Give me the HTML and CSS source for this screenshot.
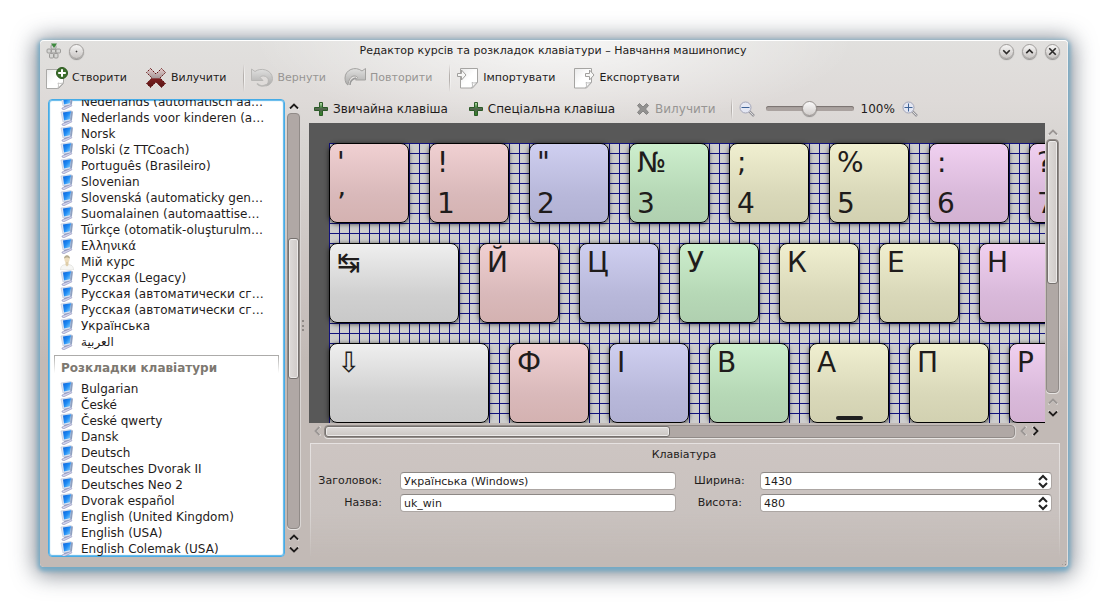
FILE: index.html
```html
<!DOCTYPE html>
<html lang="uk">
<head>
<meta charset="utf-8">
<title>Редактор курсів та розкладок клавіатури – Навчання машинопису</title>
<link rel="stylesheet" href="styles.css">
</head>
<body>
<svg class="defs" aria-hidden="true">
  <defs>
    <linearGradient id="screen" x1="0" y1="0" x2="1" y2="1"><stop offset="0" stop-color="#0a5fd8"/><stop offset=".5" stop-color="#1f8cf4"/><stop offset="1" stop-color="#9adcff"/></linearGradient>
    <linearGradient id="paper" x1="0" y1="0" x2="1" y2="1"><stop offset="0" stop-color="#e9e9e9"/><stop offset=".5" stop-color="#fff"/></linearGradient>
    <linearGradient id="plusfill" x1="0" y1="0" x2="0" y2="1"><stop offset="0" stop-color="#bfe6b0"/><stop offset=".35" stop-color="#4f8a4a"/><stop offset=".5" stop-color="#54604f"/><stop offset="1" stop-color="#2f8a22"/></linearGradient>
    <linearGradient id="crossfill" x1="0" y1="0" x2="0" y2="1"><stop offset="0" stop-color="#e6cccc"/><stop offset=".48" stop-color="#a89a9a"/><stop offset=".55" stop-color="#7a2020"/><stop offset="1" stop-color="#5a1515"/></linearGradient>
    <linearGradient id="arrowfill" x1="0" y1="0" x2="0" y2="1"><stop offset="0" stop-color="#e0e0df"/><stop offset="1" stop-color="#acabaa"/></linearGradient>
  </defs>
  <symbol id="computer" viewBox="0 0 16 16">
    <path d="M1 2l9.500-1.500 2 1-1 9-8.500 1.500z" fill="#dfe6f3" stroke="#b7c3da" stroke-width=".6"/>
    <path d="M3 2.500l8-1.300-1 8-6 1.300z" fill="url(#screen)"/>
    <path d="M11 1.200l1.800.5-1 9-1.700-1.200z" fill="#8e9fc0"/>
    <path d="M4 12l5-1 1 1.500-5 2z" fill="#8a93b8"/>
    <path d="M2 14l9-3.500 1 1.200-8 4-2-.7z" fill="#d5d5ee" stroke="#8f93bb" stroke-width=".6"/>
  </symbol>
  <symbol id="person" viewBox="0 0 16 16">
    <path d="M.5 16c0-4 2-5.500 6.500-5.500s6.500 1.500 6.500 5.500z" fill="#f6f6f4" stroke="#deded8" stroke-width=".7"/>
    <ellipse cx="7" cy="5" rx="2.600" ry="3.500" fill="#ecdcbc"/><path d="M4 5c-.3-5 6.300-5 6 0-1-2-5-2-6 0z" fill="#b5ac91"/>
    <path d="M5.500 8h3v3L7 12.500 5.500 11z" fill="#dfcda8"/>
  </symbol>
  <symbol id="plus" viewBox="0 0 16 16"><path d="M6.500 1.500h3v5h5v3h-5v5h-3v-5h-5v-3h5z" fill="url(#plusfill)" stroke="#2c5a28" stroke-width="1" stroke-linejoin="round"/></symbol>
  <symbol id="up" viewBox="0 0 12 12"><path d="M1.500 9.500L6 5l4.500 4.500" fill="none" stroke="#fff" stroke-opacity=".6" stroke-width="1.600"/><path d="M2 8.500l4-4 4 4" fill="none" stroke="currentColor" stroke-width="1.800"/></symbol>
</svg>

<div class="window">
  <header class="titlebar">
    <div class="title-side">
      <svg class="icon16" viewBox="0 0 16 16"><g fill="#d6d6d4" stroke="#8e8d8b" stroke-width=".8"><rect x="1" y="6" width="4" height="4" rx="1"/><rect x="5.500" y="6" width="4" height="4" rx="1"/><rect x="10" y="6" width="4.500" height="4" rx="1"/><rect x="3.500" y="10.500" width="4" height="4.500" rx="1"/><rect x="8" y="10.500" width="4" height="4.500" rx="1"/><rect x="5" y="2" width="5" height="4" rx="1"/></g><path d="M5 .5h6L8 5z" fill="#3e8a3e"/></svg>
      <button class="round" aria-label="Меню вікна"><svg viewBox="0 0 16 16"><circle cx="8" cy="8" r=".6" fill="#333" stroke-width="1"/></svg></button>
    </div>
    <h1 class="title">Редактор курсів та розкладок клавіатури – Навчання машинопису</h1>
    <div class="title-side end">
      <button class="round" aria-label="Згорнути"><svg viewBox="0 0 16 16"><path d="M4 6.500l4 4 4-4"/></svg></button>
      <button class="round" aria-label="Розгорнути"><svg viewBox="0 0 16 16"><path d="M4 10l4-4 4 4"/></svg></button>
      <button class="round" aria-label="Закрити"><svg viewBox="0 0 16 16"><path d="M4 4l8 8M12 4l-8 8"/></svg></button>
    </div>
  </header>

  <nav class="toolbar">
    <button class="tool"><svg class="icon22" viewBox="0 0 22 22"><path d="M.5 2.500h17v14l-5 5H.5z" fill="url(#paper)" stroke="#aaa9a7"/><path d="M11.500 21.500c1.500-1.500 1-4 .5-5.500 2 .8 4 .5 5.500-.5z" fill="#fff" stroke="#b5b4b2" stroke-width=".8"/><circle cx="16" cy="6" r="5.500" fill="#3c6e2c" stroke="#2c5a20"/><path d="M16 2.200v7.600M12.200 6h7.600" stroke="#fff" stroke-width="2"/></svg>Створити</button>
    <button class="tool"><svg class="icon22" viewBox="0 0 22 22"><path d="M5.500 1.500L11 7l5.500-5.500 4 4L15 11l5.500 5.500-4 4L11 15l-5.500 5.500-4-4L7 11 1.500 5.500z" fill="url(#crossfill)" stroke="#651717" stroke-dasharray="2 1"/></svg>Вилучити</button>
    <span class="sep"></span>
    <button class="tool" disabled><svg class="icon22" viewBox="0 0 22 22"><path d="M.5 2l3.500 2.500C9 .5 21 2 21.500 11.500c0 4-3 7-7 7.500 5-4 3-10-2-10-2 0-2.500.5-3.500 1.500l3 3H.5z" fill="url(#arrowfill)" stroke="#b8b7b5"/><path d="M6 16.500c2 2.500 6 3 10 1" fill="none" stroke="#b9b8b6" stroke-width="1.500"/></svg>Вернути</button>
    <button class="tool" disabled><svg class="icon22" viewBox="0 0 22 22"><path d="M21.500 1.500L18 4C11-1.500 1 3 1 11c0 4 1.500 6.500 3 7 .5-5 3-9 6-9 2 0 3 .5 3.500 1.500L11.500 13h10z" fill="url(#arrowfill)" stroke="#a3a2a0"/><path d="M6 18c0-3 2-6 6-7" fill="none" stroke="#999" stroke-width="1.500"/></svg>Повторити</button>
    <span class="sep"></span>
    <button class="tool"><svg class="icon22" viewBox="0 0 22 22"><path d="M3.500 1.500h17v14l-5 5.500h-12z" fill="url(#paper)" stroke="#a5a4a2"/><path d="M14.500 21c1.500-1.500 1-4 .5-5.500 2 .8 4 .5 5.500-.5z" fill="#fff" stroke="#aaa" stroke-width=".8"/><path d="M.5 6.500h4V3L9 8l-4.500 5V9.500h-4z" fill="#f7f7f6" stroke="#a09f9d"/></svg>Імпортувати</button>
    <button class="tool"><svg class="icon22" viewBox="0 0 22 22"><path d="M1.500 1.500h17v14l-5 5.500h-12z" fill="url(#paper)" stroke="#a5a4a2"/><path d="M12.500 21c1.500-1.500 1-4 .5-5.500 2 .8 4 .5 5.500-.5z" fill="#fff" stroke="#aaa" stroke-width=".8"/><path d="M12.500 6.500h4V3L21 8l-4.500 5V9.500h-4z" fill="#f7f7f6" stroke="#a09f9d"/></svg>Експортувати</button>
  </nav>

  <div class="content">
    <aside class="sidebar">
      <div class="list">
        <ul>
          <li><svg><use href="#computer"/></svg>Nederlands (automatisch aa…</li>
          <li><svg><use href="#computer"/></svg>Nederlands voor kinderen (a…</li>
          <li><svg><use href="#computer"/></svg>Norsk</li>
          <li><svg><use href="#computer"/></svg>Polski (z TTCoach)</li>
          <li><svg><use href="#computer"/></svg>Português (Brasileiro)</li>
          <li><svg><use href="#computer"/></svg>Slovenian</li>
          <li><svg><use href="#computer"/></svg>Slovenská (automaticky gen…</li>
          <li><svg><use href="#computer"/></svg>Suomalainen (automaattise…</li>
          <li><svg><use href="#computer"/></svg>Türkçe (otomatik-oluşturulm…</li>
          <li><svg><use href="#computer"/></svg>Ελληνικά</li>
          <li><svg><use href="#person"/></svg>Мій курс</li>
          <li><svg><use href="#computer"/></svg>Русская (Legacy)</li>
          <li><svg><use href="#computer"/></svg>Русская (автоматически сг…</li>
          <li><svg><use href="#computer"/></svg>Русская (автоматически сг…</li>
          <li><svg><use href="#computer"/></svg>Українська</li>
          <li><svg><use href="#computer"/></svg>العربية</li>
        </ul>
        <h2 class="group">Розкладки клавіатури</h2>
        <ul class="layouts">
          <li><svg><use href="#computer"/></svg>Bulgarian</li>
          <li><svg><use href="#computer"/></svg>České</li>
          <li><svg><use href="#computer"/></svg>České qwerty</li>
          <li><svg><use href="#computer"/></svg>Dansk</li>
          <li><svg><use href="#computer"/></svg>Deutsch</li>
          <li><svg><use href="#computer"/></svg>Deutsches Dvorak II</li>
          <li><svg><use href="#computer"/></svg>Deutsches Neo 2</li>
          <li><svg><use href="#computer"/></svg>Dvorak español</li>
          <li><svg><use href="#computer"/></svg>English (United Kingdom)</li>
          <li><svg><use href="#computer"/></svg>English (USA)</li>
          <li><svg><use href="#computer"/></svg>English Colemak (USA)</li>
        </ul>
      </div>
      <div class="scroll vertical">
        <button class="arrow" aria-label="Вгору"><svg><use href="#up"/></svg></button>
        <div class="track"><div class="thumb" style="top:30%;height:34%"></div></div>
        <button class="arrow" aria-label="Вгору"><svg><use href="#up"/></svg></button>
        <button class="arrow down" aria-label="Вниз"><svg><use href="#up"/></svg></button>
      </div>
    </aside>
    <div class="splitter"></div>

    <main class="editor">
      <div class="keybar">
        <button class="tool"><svg class="icon16"><use href="#plus"/></svg>Звичайна клавіша</button>
        <button class="tool"><svg class="icon16"><use href="#plus"/></svg>Спеціальна клавіша</button>
        <button class="tool" disabled><svg class="icon16" viewBox="0 0 16 16"><path d="M4.500 2.500L8 6l3.500-3.500 2 2L10.500 8l3 3.500-2 2L8 10l-3.500 3.500-2-2L5.500 8l-3-3.500z" fill="#929190" stroke="#868584" stroke-linejoin="round"/></svg>Вилучити</button>
        <span class="sep"></span>
        <div class="zoom">
          <button class="tool" aria-label="Зменшити"><svg class="icon16" viewBox="0 0 16 16"><path d="M10 10l5 5" stroke="#96959a" stroke-width="2.500"/><path d="M10 10l4.500 4.500" stroke="#ddd" stroke-width="1"/><circle cx="6.500" cy="6.500" r="5.500" fill="#e4e7f3" stroke="#a4a6b8"/><path d="M2.500 6.500h8" stroke="#3d6296"/></svg></button>
          <input class="slider" type="range" min="0" max="200" value="100" aria-label="Масштаб">
          <output>100%</output>
          <button class="tool" aria-label="Збільшити"><svg class="icon16" viewBox="0 0 16 16"><path d="M10 10l5 5" stroke="#96959a" stroke-width="2.500"/><path d="M10 10l4.500 4.500" stroke="#ddd" stroke-width="1"/><circle cx="6.500" cy="6.500" r="5.500" fill="#e4e7f3" stroke="#a4a6b8"/><path d="M2.500 6.500h8M6.500 2.500v8" stroke="#3d6296"/></svg></button>
        </div>
      </div>

      <div class="view">
        <div class="canvas">
          <div class="keyboard">
            <div class="row">
              <div class="key red"><span>'</span><span>’</span></div>
              <div class="key red"><span>!</span><span>1</span></div>
              <div class="key blue"><span>"</span><span>2</span></div>
              <div class="key green"><span>№</span><span>3</span></div>
              <div class="key yellow"><span>;</span><span>4</span></div>
              <div class="key yellow"><span>%</span><span>5</span></div>
              <div class="key violet"><span>:</span><span>6</span></div>
              <div class="key violet"><span>?</span><span>7</span></div>
            </div>
            <div class="row">
              <div class="key tab"><span>↹</span></div>
              <div class="key red"><span>Й</span></div>
              <div class="key blue"><span>Ц</span></div>
              <div class="key green"><span>У</span></div>
              <div class="key yellow"><span>К</span></div>
              <div class="key yellow"><span>Е</span></div>
              <div class="key violet"><span>Н</span></div>
            </div>
            <div class="row">
              <div class="key caps"><span>⇩</span></div>
              <div class="key red"><span>Ф</span></div>
              <div class="key blue"><span>І</span></div>
              <div class="key green"><span>В</span></div>
              <div class="key yellow home"><span>А</span></div>
              <div class="key yellow"><span>П</span></div>
              <div class="key violet"><span>Р</span></div>
            </div>
          </div>
        </div>
        <div class="scroll vertical">
          <button class="arrow" disabled aria-label="Вгору"><svg><use href="#up"/></svg></button>
          <div class="track"><div class="thumb" style="top:0;height:57%"></div></div>
          <button class="arrow" disabled aria-label="Вгору"><svg><use href="#up"/></svg></button>
          <button class="arrow down" aria-label="Вниз"><svg><use href="#up"/></svg></button>
        </div>
        <div class="scroll horizontal">
          <button class="arrow left" disabled aria-label="Ліворуч"><svg><use href="#up"/></svg></button>
          <div class="track"><div class="thumb" style="left:0;width:50%"></div></div>
          <button class="arrow left" disabled aria-label="Ліворуч"><svg><use href="#up"/></svg></button>
          <button class="arrow right" aria-label="Праворуч"><svg><use href="#up"/></svg></button>
        </div>
      </div>

      <section class="panel">
        <h2>Клавіатура</h2>
        <form class="form">
          <label for="caption">Заголовок:</label>
          <input id="caption" class="field" type="text" value="Українська (Windows)">
          <label for="width">Ширина:</label>
          <div class="spin"><input id="width" class="field" type="number" value="1430"><svg viewBox="0 0 12 16"><path d="M2 7l4-4 4 4M2 10l4 4 4-4"/></svg></div>
          <label for="name">Назва:</label>
          <input id="name" class="field" type="text" value="uk_win">
          <label for="height">Висота:</label>
          <div class="spin"><input id="height" class="field" type="number" value="480"><svg viewBox="0 0 12 16"><path d="M2 7l4-4 4 4M2 10l4 4 4-4"/></svg></div>
        </form>
      </section>
    </main>
  </div>
  <span class="grip"></span>
</div>
</body>
</html>
```
FILE: styles.css
```css
* { box-sizing: border-box; }

body {
  margin: 0;
  height: 100vh;
  padding: 40px;
  display: flex;
  background: #fff;
  color: #1f1c1b;
  font: 11px/16px "DejaVu Sans", sans-serif;
}

.defs { position: absolute; width: 0; height: 0; }

h1, h2, ul { margin: 0; padding: 0; font: inherit; }

button {
  margin: 0;
  padding: 0;
  border: 0;
  background: none;
  color: inherit;
  font: inherit;
}

.window {
  position: relative;
  flex: 1;
  min-width: 0;
  display: flex;
  flex-direction: column;
  padding: 0 8px 10px 6px;
  border-radius: 4px;
  background:
    radial-gradient(ellipse 300px 90px at 50% 0, rgba(255, 255, 255, .75), rgba(255, 255, 255, 0)),
    linear-gradient(#e1e0de, #dedad8 60px, #d8d5d2 100px, #c9c1be 260px, #c2bab6 320px);
  box-shadow:
    inset 0 1px 0 #fff,
    inset -1px 0 0 rgba(255, 255, 255, .5),
    0 2px 4px 2px #74aac6,
    0 3px 22px 5px rgba(50, 60, 75, .6);
}

.titlebar {
  display: grid;
  grid-template-columns: 1fr auto 1fr;
  align-items: center;
  height: 22px;
}

.title-side { display: flex; align-items: center; gap: 7px; }
.title-side.end { justify-content: flex-end; gap: 8px; }
.icon16 { width: 16px; height: 16px; flex: none; }
.icon22 { width: 22px; height: 22px; flex: none; }

.round {
  width: 15px;
  height: 15px;
  border: 1px solid #a09d9b;
  border-radius: 50%;
  background: linear-gradient(#f6f5f4, #c9c6c4);
  box-shadow: 0 1px 1px rgba(0, 0, 0, .35);
  display: grid;
}
.round svg { width: 13px; height: 13px; fill: none; stroke: #2d2b2a; stroke-width: 2; }

.toolbar { display: flex; align-items: center; height: 32px; gap: 18px; }
.tool { display: flex; align-items: center; gap: 4px; white-space: nowrap; }
.tool:disabled { color: #979593; }
.sep {
  width: 2px;
  height: 28px;
  margin: 0 -12px 0 -1px;
  background: linear-gradient(90deg, #b5b0ad 1px, #f3f2f1 1px);
  -webkit-mask-image: linear-gradient(transparent, #000 40%, #000 60%, transparent);
  mask-image: linear-gradient(transparent, #000 40%, #000 60%, transparent);
}

.content { flex: 1; min-height: 0; display: flex; }

.sidebar { display: flex; width: 255px; padding: 5px 0 0 2px; flex: none; }

.list {
  flex: 1;
  min-width: 0;
  display: flex;
  flex-direction: column;
  justify-content: flex-end;
  overflow: hidden;
  padding: 0 5px;
  border: 1px solid #46abe6;
  border-radius: 4px;
  background: #fff;
  box-shadow: inset 0 0 1px 1px #5cb6ea;
  font-size: 12px;
}
.list ul { list-style: none; }
.list .layouts { margin-bottom: -1px; }
.list li { display: flex; align-items: center; gap: 5px; height: 16px; padding-left: 6px; white-space: nowrap; }
.list svg { width: 16px; height: 16px; flex: none; }

.group {
  margin: 5px 0 0;
  padding: 4px 6px;
  height: 26px;
  border: 1px solid;
  border-image: linear-gradient(#aaa9a7, transparent 70%) 1;
  color: #7d7870;
  font-weight: bold;
  white-space: nowrap;
}

.scroll { display: flex; align-items: center; }
.scroll.vertical { flex-direction: column; width: 15px; padding: 2px 0 3px; }
.scroll.horizontal { height: 16px; padding: 0 3px 0 1px; }
.sidebar .scroll { margin-left: 1px; padding: 0 0 1px; }

.arrow { width: 13px; height: 13px; display: grid; place-items: center; flex: none; }
.arrow svg { width: 12px; height: 12px; }
.arrow:disabled { color: #9b9694; }
.arrow.down svg { transform: rotate(180deg); }
.arrow.left svg { transform: rotate(-90deg); }
.arrow.right svg { transform: rotate(90deg); }

.track {
  position: relative;
  flex: 1;
  border: 1px solid #918b88;
  border-radius: 4px;
  background: #b0a8a5;
  box-shadow: 0 1px 0 #e8e5e3, 1px 0 0 #dad6d4;
}
.vertical .track { width: 13px; margin: 1px 0; }
.horizontal .track { height: 13px; margin: 0 1px; }

.thumb {
  position: absolute;
  border: 1px solid #76716e;
  border-radius: 3px;
  background: linear-gradient(90deg, #dedbd9, #cfcac8);
  box-shadow: inset 0 0 0 1px #eceae9;
}
.vertical .thumb { left: 0; right: 0; }
.horizontal .thumb { top: 0; bottom: 0; background: linear-gradient(#dedbd9, #cbc6c3); }

.splitter {
  width: 8px;
  flex: none;
  background: radial-gradient(circle at 2px 2px, #8f8986 1px, transparent 1px) 0 50% / 8px 4px no-repeat,
    radial-gradient(circle at 2px 2px, #8f8986 1px, transparent 1px) 0 51% / 8px 4px no-repeat,
    radial-gradient(circle at 2px 2px, #8f8986 1px, transparent 1px) 0 49% / 8px 4px no-repeat;
}

.editor { flex: 1; min-width: 0; display: flex; flex-direction: column; }

.keybar { display: flex; align-items: center; height: 29px; padding-left: 4px; gap: 20px; font-size: 12px; }
.keybar .sep { height: 22px; margin: 0 -14px 0 -5px; }
.zoom { display: flex; align-items: center; gap: 7px; }

.slider { appearance: none; width: 88px; height: 16px; margin: 0 0 0 4px; background: none; }
.slider::-webkit-slider-runnable-track {
  height: 5px;
  border-radius: 3px;
  background: #aaa29f;
  box-shadow: inset 0 1px 1px #78716e;
}
.slider::-webkit-slider-thumb {
  appearance: none;
  width: 15px;
  height: 15px;
  margin-top: -5px;
  border: 1px solid #989390;
  border-radius: 50%;
  background: linear-gradient(#faf9f9, #d2cecc);
  box-shadow: 0 1px 1px rgba(0, 0, 0, .35);
}

.view {
  flex: 1;
  min-height: 0;
  display: grid;
  grid-template-columns: minmax(0, 1fr) 15px;
  grid-template-rows: minmax(0, 1fr) 16px;
}

.canvas { overflow: hidden; padding: 20px; background: #585858; }

.keyboard {
  width: 1430px;
  height: 480px;
  display: flex;
  flex-direction: column;
  gap: 20px;
  background:
    linear-gradient(90deg, #10107c 1px, transparent 1px) 0 0 / 10px 10px,
    linear-gradient(#10107c 1px, transparent 1px) 0 0 / 10px 10px,
    #cdcdcd;
}

.row { display: flex; gap: 20px; }

.key {
  position: relative;
  flex: none;
  width: 80px;
  height: 80px;
  display: flex;
  flex-direction: column;
  justify-content: space-between;
  padding: 5px 7px 4px;
  border: 1px solid #000;
  border-radius: 8px;
  background: linear-gradient(#efefef, #d0d0d0 65%, #c9c9c9);
  box-shadow: 0 1px 5px rgba(0, 0, 0, .7);
  font-size: 28px;
  line-height: 28px;
}
.key.tab { width: 130px; }
.key.caps { width: 160px; }
.key.red { background: linear-gradient(#f0d0d2, #d9b9ba 65%, #d4b2b1); }
.key.blue { background: linear-gradient(#cfcff0, #b8b8da 65%, #b1b1d3); }
.key.green { background: linear-gradient(#cdeecd, #b6d8b6 65%, #b0d0b0); }
.key.yellow { background: linear-gradient(#f0efd0, #d9d8b9 65%, #d2d1b1); }
.key.violet { background: linear-gradient(#f0d0f0, #d9b9da 65%, #d3b2d2); }

.home::after {
  content: "";
  position: absolute;
  left: 26px;
  right: 25px;
  bottom: 2px;
  height: 4px;
  border-radius: 2px;
  background: #1f1f1f;
}

.panel {
  flex: none;
  height: 114px;
  margin: 4px 0 0 1px;
  padding: 3px 7px 0 5px;
  border-radius: 4px;
  border: 1px solid;
  border-image: linear-gradient(#e6e2e1, #d9d5d3 60%, transparent) 1;
  border-bottom: 0;
  background: linear-gradient(#cdc5c2, #c9c2bf 60%, transparent);
}
.panel h2 { text-align: center; }

.form {
  display: grid;
  grid-template-columns: 66px minmax(0, 276fr) 48px minmax(0, 292fr);
  gap: 4px 18px;
  align-items: center;
  margin-top: 9px;
}
.form label { text-align: right; white-space: nowrap; }

.field {
  display: block;
  width: 100%;
  height: 18px;
  padding: 0 3px;
  border: 1px solid #aca6a3;
  border-top-color: #8d8885;
  border-radius: 4px;
  background: #fff;
  color: inherit;
  font: inherit;
  appearance: textfield;
}
.field::-webkit-inner-spin-button { appearance: none; }

.spin { position: relative; }
.spin svg {
  position: absolute;
  right: 3px;
  top: 1px;
  width: 12px;
  height: 16px;
  fill: none;
  stroke: #222;
  stroke-width: 2;
}

.grip {
  position: absolute;
  right: 1px;
  bottom: 1px;
  width: 6px;
  height: 6px;
  background: radial-gradient(#8b8582 1px, transparent 1px) 0 0 / 3px 3px;
  clip-path: polygon(100% 0, 100% 100%, 0 100%);
}
```
